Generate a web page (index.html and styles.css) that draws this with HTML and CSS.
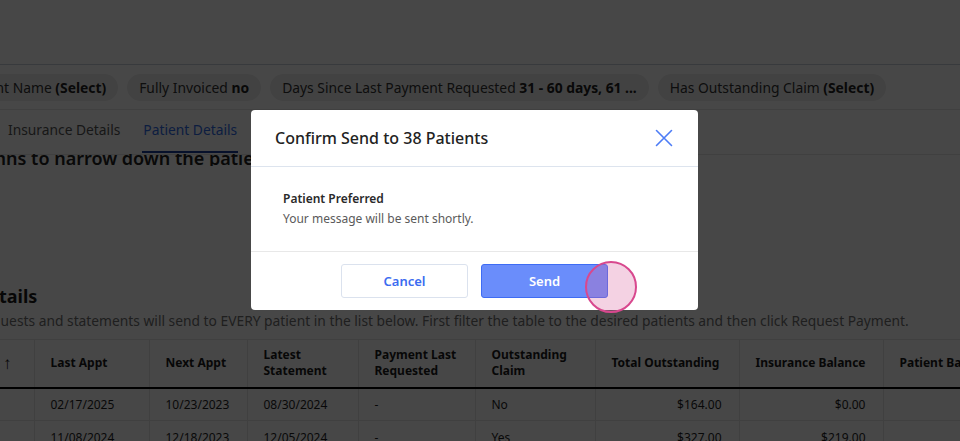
FILE: index.html
```html
<!DOCTYPE html>
<html lang="en">
<head>
<meta charset="utf-8">
<title>Confirm Send</title>
<link rel="stylesheet" href="styles.css">
</head>
<body>
<div class="page">
  <header class="topbar"></header>
  <div class="filters">
    <span class="chip chip-first">Patient Name <b>(Select)</b></span>
    <span class="chip">Fully Invoiced <b>no</b></span>
    <span class="chip">Days Since Last Payment Requested <b>31 - 60 days, 61 ...</b></span>
    <span class="chip">Has Outstanding Claim <b>(Select)</b></span>
  </div>
  <nav class="tabs">
    <span class="tab">Insurance Details</span>
    <span class="tab active">Patient Details</span>
  </nav>
  <div class="hint-clip"><div class="hint">Select columns to narrow down the patients list</div></div>
  <section class="details">
    <h2 class="details-title">Patient Details</h2>
    <p class="details-desc">Payment requests and statements will send to EVERY patient in the list below. First filter the table to the desired patients and then click Request Payment.</p>
    <table class="grid">
      <colgroup>
        <col class="c0"><col class="c1"><col class="c2"><col class="c3"><col class="c4"><col class="c5"><col class="c6"><col class="c7"><col class="c8">
      </colgroup>
      <thead>
        <tr>
          <th class="sort">↑</th>
          <th>Last Appt</th>
          <th>Next Appt</th>
          <th>Latest<br>Statement</th>
          <th>Payment Last<br>Requested</th>
          <th>Outstanding<br>Claim</th>
          <th class="num num-wide">Total Outstanding</th>
          <th class="num">Insurance Balance</th>
          <th>Patient Balance</th>
        </tr>
      </thead>
      <tbody>
        <tr>
          <td></td><td>02/17/2025</td><td>10/23/2023</td><td>08/30/2024</td><td>-</td><td>No</td><td class="num">$164.00</td><td class="num">$0.00</td><td></td>
        </tr>
        <tr>
          <td></td><td>11/08/2024</td><td>12/18/2023</td><td>12/05/2024</td><td>-</td><td>Yes</td><td class="num">$327.00</td><td class="num">$219.00</td><td></td>
        </tr>
      </tbody>
    </table>
  </section>
</div>

<div class="overlay"></div>

<div class="modal" role="dialog">
  <div class="modal-head">
    <h3 class="modal-title">Confirm Send to 38 Patients</h3>
    <svg class="close" width="18" height="18" viewBox="0 0 18 18" aria-label="Close">
      <path d="M1.5 1.5 L16.5 16.5 M16.5 1.5 L1.5 16.5" stroke="#4d7cf6" stroke-width="1.6" fill="none" stroke-linecap="round"/>
    </svg>
  </div>
  <div class="modal-body">
    <div class="pref-title">Patient Preferred</div>
    <div class="pref-text">Your message will be sent shortly.</div>
  </div>
  <div class="modal-foot">
    <button class="btn btn-cancel">Cancel</button>
    <button class="btn btn-send">Send</button>
  </div>
</div>

<div class="cursor"></div>
</body>
</html>
```

FILE: styles.css
```css
* { box-sizing: border-box; }

html, body {
  margin: 0;
  padding: 0;
  width: 960px;
  height: 441px;
  overflow: hidden;
  background: #ffffff;
  font-family: "Noto Sans", "Open Sans", sans-serif;
  color: #222;
}

.page {
  width: 960px;
  overflow: hidden;
}

.topbar {
  height: 65px;
  border-bottom: 1px solid #c8cfdc;
}

.filters {
  display: flex;
  gap: 9px;
  padding: 9px 0;
  height: 45px;
  border-bottom: 1px solid #e4e4e4;
  white-space: nowrap;
}

.chip {
  flex: none;
  height: 27px;
  line-height: 27px;
  padding: 0 12px;
  border-radius: 14px;
  background: #ededed;
  font-size: 13.85px;
  color: #333;
}

.chip b { font-weight: 700; color: #222; }

.chip-first { margin-left: -49px; }

.tabs {
  display: flex;
  gap: 21px;
  height: 45px;
  padding-left: 7px;
  border-bottom: 1px solid #e4e4e4;
  white-space: nowrap;
}

.tab {
  padding: 10px 1px 0;
  font-size: 13.8px;
  color: #555;
  height: 43px;
}

.tab.active {
  color: #2f6be6;
  border-bottom: 2px solid #1a3f9a;
}

.hint-clip {
  height: 12px;
  overflow: hidden;
  margin-top: -1px;
}

.hint {
  margin-top: -6px;
  margin-left: -105px;
  font-size: 18px;
  line-height: 20px;
  font-weight: 600;
  color: #222;
  white-space: nowrap;
}

.details {
  padding-top: 118px;
}

.details-title {
  margin: 0 0 0 -95px;
  font-size: 18px;
  line-height: 24px;
  font-weight: 700;
  color: #1a1a1a;
  white-space: nowrap;
}

.details-desc {
  margin: 3px 0 0 -82px;
  font-size: 13.8px;
  line-height: 20px;
  color: #707070;
  white-space: nowrap;
}

.grid {
  margin-top: 8px;
  border-collapse: collapse;
  table-layout: fixed;
  width: 1100px;
  font-size: 12px;
  color: #1e1e1e;
}

.c0 { width: 34px; }
.c1 { width: 115px; }
.c2 { width: 98px; }
.c3 { width: 111px; }
.c4 { width: 117px; }
.c5 { width: 120px; }
.c6 { width: 144px; }
.c7 { width: 144px; }
.c8 { width: 217px; }

.grid th, .grid td {
  border-left: 1px solid #e6e6e6;
  border-right: 1px solid #e6e6e6;
  padding: 0 16px;
  text-align: left;
  vertical-align: middle;
  white-space: nowrap;
}

.grid thead tr {
  height: 48px;
  border-top: 1px solid #e6e6e6;
  border-bottom: 2px solid #000;
}

.grid th {
  font-weight: 700;
  line-height: 16px;
  color: #1a1a1a;
}

.grid th.sort {
  padding: 0 0 0 3px;
  font-size: 17px;
  font-weight: 400;
  border-left: none;
}

.grid td:first-child { border-left: none; }

.grid tbody tr {
  height: 33px;
  border-bottom: 1px solid #e6e6e6;
}

.grid .num { text-align: right; padding-right: 17px; }
.grid .num-wide { padding-right: 20px; }

.overlay {
  position: fixed;
  inset: 0;
  background: rgba(0, 0, 0, 0.72);
}

.modal {
  position: fixed;
  left: 251px;
  top: 110px;
  width: 447px;
  background: #fff;
  border-radius: 4px;
}

.modal-head {
  height: 57px;
  display: flex;
  align-items: center;
  justify-content: space-between;
  padding: 0 25px 0 24px;
  border-bottom: 1px solid #dde4ee;
}

.modal-title {
  margin: 0;
  font-size: 16px;
  font-weight: 500;
  color: #222;
}

.close { display: block; }

.modal-body {
  padding: 22px 32px 22px;
  font-size: 12px;
  line-height: 20px;
}

.pref-title { font-weight: 600; color: #2a2a2a; }
.pref-text { color: #5a5a5a; }

.modal-foot {
  display: flex;
  justify-content: center;
  gap: 13px;
  padding: 12px 0 12px;
  border-top: 1px solid #e8e8e8;
}

.btn {
  width: 127px;
  height: 34px;
  border-radius: 3px;
  font-family: inherit;
  font-size: 13px;
  font-weight: 600;
}

.btn-cancel {
  background: #fff;
  border: 1px solid #dbe2ee;
  color: #3c6cf0;
}

.btn-send {
  background: #6a8dfb;
  border: 1px solid #3e6cf4;
  color: #fff;
}

.cursor {
  position: fixed;
  left: 585px;
  top: 261px;
  width: 52px;
  height: 52px;
  border-radius: 50%;
  background: rgba(217, 100, 158, 0.29);
  border: 2px solid #d8488e;
}
```
